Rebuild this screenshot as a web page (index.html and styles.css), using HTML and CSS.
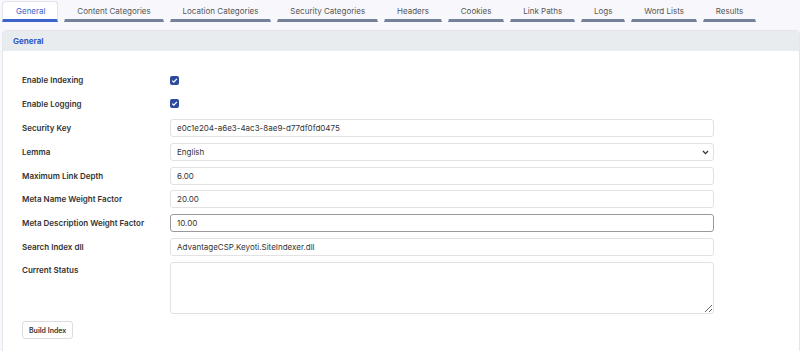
FILE: index.html
```html
<!DOCTYPE html>
<html lang="en">
<head>
    <meta charset="UTF-8">
    <title>Site Indexer - General</title>
    <link rel="stylesheet" href="styles.css">
</head>
<body>
    <div class="tabs">
        <div class="tab active">General</div>
        <div class="tab">Content Categories</div>
        <div class="tab">Location Categories</div>
        <div class="tab">Security Categories</div>
        <div class="tab">Headers</div>
        <div class="tab">Cookies</div>
        <div class="tab">Link Paths</div>
        <div class="tab">Logs</div>
        <div class="tab">Word Lists</div>
        <div class="tab">Results</div>
    </div>

    <div class="panel">
        <div class="panel-header">General</div>
        <div class="panel-body">
            <div class="row">
                <label>Enable Indexing</label>
                <span class="check"><svg width="9" height="9" viewBox="0 0 9 9"><path d="M2.2 4.6 L3.8 6.1 L6.9 2.9" fill="none" stroke="#fff" stroke-width="1.3"/></svg></span>
            </div>
            <div class="row">
                <label>Enable Logging</label>
                <span class="check"><svg width="9" height="9" viewBox="0 0 9 9"><path d="M2.2 4.6 L3.8 6.1 L6.9 2.9" fill="none" stroke="#fff" stroke-width="1.3"/></svg></span>
            </div>
            <div class="row">
                <label>Security Key</label>
                <input class="field" type="text" value="e0c1e204-a6e3-4ac3-8ae9-d77df0fd0475">
            </div>
            <div class="row">
                <label>Lemma</label>
                <div class="select-wrap">
                    <select class="field">
                        <option>English</option>
                    </select>
                    <svg class="arrow" width="7" height="5" viewBox="0 0 7 5"><path d="M1 1 L3.5 3.6 L6 1" fill="none" stroke="#333" stroke-width="1.3"/></svg>
                </div>
            </div>
            <div class="row">
                <label>Maximum Link Depth</label>
                <input class="field" type="text" value="6.00">
            </div>
            <div class="row">
                <label>Meta Name Weight Factor</label>
                <input class="field" type="text" value="20.00">
            </div>
            <div class="row">
                <label>Meta Description Weight Factor</label>
                <input class="field focused" type="text" value="10.00">
            </div>
            <div class="row">
                <label>Search Index dll</label>
                <input class="field" type="text" value="AdvantageCSP.Keyoti.SiteIndexer.dll">
            </div>
            <div class="row top">
                <label>Current Status</label>
                <textarea class="field area"></textarea>
            </div>
            <button class="btn">Build Index</button>
        </div>
    </div>
</body>
</html>
```

FILE: styles.css
```css
* {
    margin: 0;
    padding: 0;
    box-sizing: border-box;
    font-family: Inter, "Noto Sans", sans-serif;
}

body {
    background-color: #f8f8fc;
    color: #333;
    padding: 1px 0 0 2px;
    overflow: hidden;
}

.tabs {
    display: flex;
    gap: 6px;
}

.tab {
    font-size: 8px;
    color: #555;
    padding: 4px 11.9px 3px;
    line-height: 10px;
    border: 1px solid transparent;
    border-bottom: 3px solid #76829a;
    border-radius: 4px 4px 0 0;
    white-space: nowrap;
}

.tab.active {
    background-color: #fff;
    color: #3b63c9;
    border-color: #dfe3ec;
    border-bottom-color: #3b63c9;
    padding-left: 13px;
    padding-right: 12px;
}

.panel {
    margin-top: 8px;
    background-color: #fff;
    border: 1px solid #e4e6ea;
    border-radius: 4px 4px 0 0;
    min-height: 330px;
}

.panel-header {
    background-color: #e9ecef;
    color: #2f58c4;
    font-size: 8px;
    font-weight: 700;
    height: 20px;
    line-height: 20px;
    padding-left: 10px;
}

.panel-body {
    padding: 20px 0 0 19px;
}

.row {
    display: flex;
    align-items: center;
    height: 18px;
    margin-bottom: 5.9px;
}

.row.top {
    align-items: flex-start;
    height: auto;
    margin-bottom: 7px;
}

.row label {
    width: 148px;
    font-size: 8px;
    font-weight: 600;
    color: #333;
}

.row.top label {
    padding-top: 3px;
}

.check {
    width: 9px;
    height: 9px;
    background-color: #2c4a9e;
    border-radius: 2px;
    display: flex;
}

.field {
    width: 544px;
    height: 18px;
    border: 1px solid #e2e2e2;
    border-radius: 3px;
    font-size: 8px;
    color: #333;
    padding: 0 6px;
    background-color: #fff;
    outline: none;
    display: block;
}

.field.focused {
    border-color: #9a9a9a;
}

.select-wrap {
    position: relative;
}

.select-wrap select {
    appearance: none;
    -webkit-appearance: none;
}

.arrow {
    position: absolute;
    right: 5px;
    top: 7px;
}

.area {
    height: 52px;
    resize: vertical;
    padding: 4px 6px;
}

.btn {
    display: block;
    font-size: 7px;
    font-weight: 600;
    color: #333;
    background-color: #fff;
    border: 1px solid #dcdcdc;
    border-radius: 3px;
    height: 18px;
    padding: 0 6px;
}
```
